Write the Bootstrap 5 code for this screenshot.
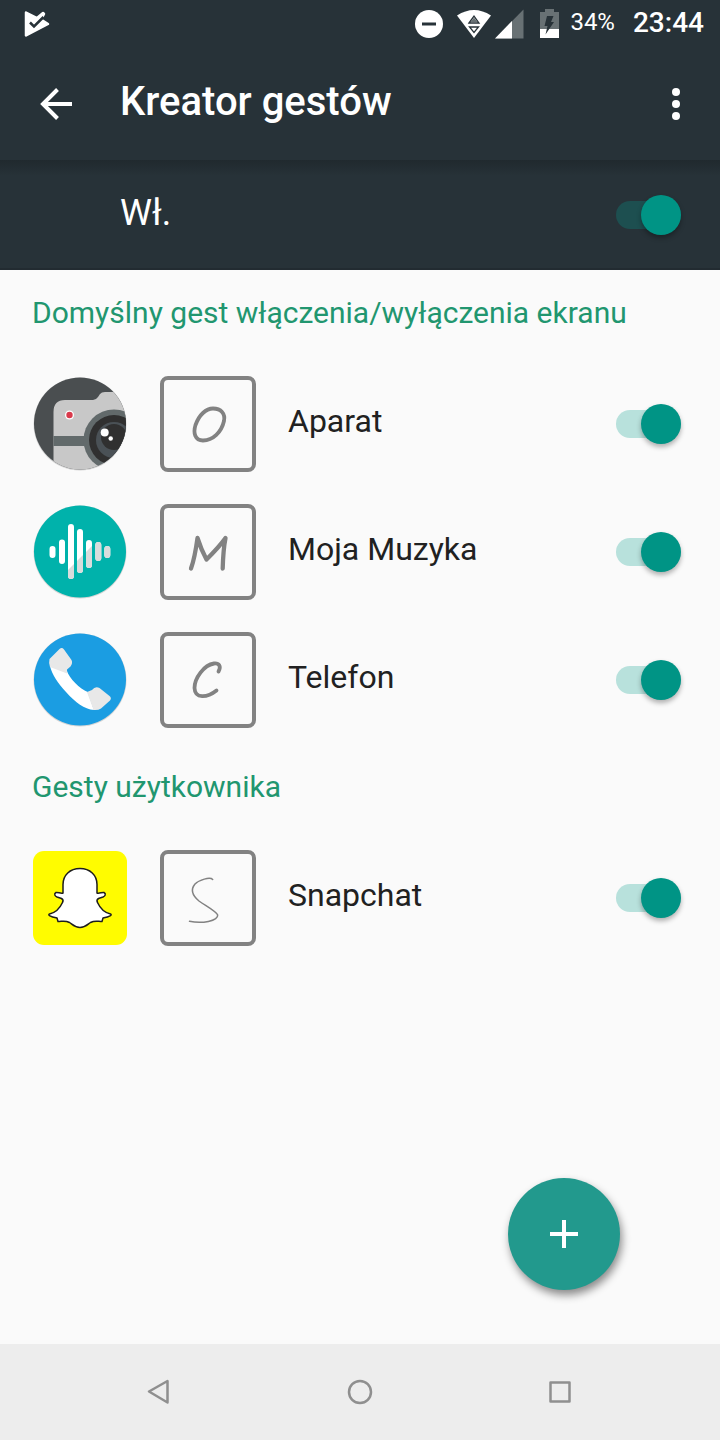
<!DOCTYPE html>
<html lang="pl">
<head>
<meta charset="utf-8">
<meta name="viewport" content="width=device-width, initial-scale=1">
<title>Kreator gestów</title>
<link href="https://cdn.jsdelivr.net/npm/bootstrap@5.3.0/dist/css/bootstrap.min.css" rel="stylesheet">
<style>
  body { font-family: Roboto, "Noto Sans", sans-serif; background: #fafafa; color: #212121; }
  svg { display: block; flex: none; }
  .dark-bar { background: #273238; color: #fff; }
  .status-bar { height: 48px; padding: 0 16px 0 22px; }
  .battery-text { font-size: 24px; line-height: 32px; padding-bottom: 4px; margin: 0 18px 0 8px; }
  .clock { font-size: 28px; line-height: 32px; font-weight: 500; padding-bottom: 2px; }
  .app-bar { height: 112px; padding: 0 28px 0 32px; }
  .app-title { font-size: 40px; line-height: 48px; font-weight: 500; margin-left: 40px; padding-bottom: 4px; }
  .icon-btn { background: none; border: 0; padding: 0; color: inherit; }
  .master-row { height: 110px; padding: 2px 39px 0 120px; border-bottom: 2px solid #222b31;
    background-image: linear-gradient(#20292e, #273238 16px); }
  .master-label { font-size: 36px; line-height: 44px; padding-bottom: 4px; }
  .section-title { height: 90px; padding: 25px 32px 0; font-size: 30px; line-height: 36px; font-weight: 400; color: #21966f; }
  .gesture-row { height: 128px; padding: 0 39px 0 32px; gap: 32px; }
  .gesture-label { font-size: 32px; line-height: 40px; padding-bottom: 6px; }
  .gesture-box { border: 4px solid #828282; border-radius: 8px; width: 96px; height: 96px; }
  .toggle { appearance: none; display: flex; align-items: center; justify-content: flex-start; flex: none;
    width: 65px; height: 28px; margin: 0; border-radius: 14px; background: #c4c4c4; }
  .toggle::before { content: ""; flex: none; width: 40px; height: 40px; border-radius: 50%; background: #f1f1f1;
    box-shadow: 0 3px 5px rgba(0, 0, 0, .3); }
  .toggle:checked { background: #b8e1dc; justify-content: flex-end; }
  .toggle:checked::before { background: #009485; }
  .master-row .toggle:checked { background: #1d4f50; }
  .fab { width: 112px; height: 112px; margin: 0 100px 54px 0; border: 0; padding: 0; border-radius: 50%;
    background: #22998d; box-shadow: 2px 5px 9px rgba(0, 0, 0, .45); }
  .nav-keys { height: 96px; background: #ededed; color: #8f8f8f; padding: 0 60px; }
</style>
</head>
<body class="d-flex flex-column min-vh-100">

<div class="dark-bar status-bar d-flex align-items-center">
  <svg width="28" height="28" viewBox="22 10 28 28" aria-hidden="true">
    <path d="M26 12.500L37 18L43 13L44 14L41 19.500L48 24L26 35.500Z" fill="#fff" stroke="#fff" stroke-width="2.500" stroke-linejoin="round"/>
    <path d="M30 22.500L34 26.500L43.500 17" stroke="#273238" stroke-width="2.500" fill="none"/>
  </svg>
  <div class="d-flex align-items-center ms-auto">
    <svg width="150" height="32" viewBox="412 8 150 32" aria-hidden="true">
      <circle cx="429" cy="24" r="14" fill="#fff"/>
      <path d="M422 24H436" stroke="#273238" stroke-width="3"/>
      <path d="M474 38L457 15.500Q474 4.500 491 15.500Z" fill="#fff"/>
      <path d="M469 23L474 16L479 23ZM469.500 27H478.500L474 32.500Z" fill="none" stroke="#273238" stroke-width="1.300"/>
      <path d="M470.500 22L474 17.500L477.500 22Z" fill="#687174"/>
      <path d="M523.500 9.500V38.500H495Z" fill="#687174"/>
      <path d="M512 21V38.500H495Z" fill="#fff"/>
      <path d="M540 12H545V9H554V12H559V38H540Z" fill="#687174"/>
      <path d="M540 29H559V38H540Z" fill="#fff"/>
      <path d="M547 16H553.500L551 22H554L545.500 34.500L547.500 26H544.500Z" fill="#273238"/>
    </svg>
    <span class="battery-text">34%</span>
    <span class="clock">23:44</span>
  </div>
</div>

<header class="dark-bar app-bar d-flex align-items-center">
  <button type="button" class="icon-btn" aria-label="Wstecz">
    <svg width="48" height="48" viewBox="0 0 48 48" fill="none" stroke="#fff" stroke-width="4"><path d="M40 24H11M25.500 9.500L11 24L25.500 38.500"/></svg>
  </button>
  <h1 class="app-title mb-0">Kreator gestów</h1>
  <button type="button" class="icon-btn ms-auto" aria-label="Więcej opcji">
    <svg width="32" height="48" viewBox="0 0 32 48" fill="#fff"><circle cx="16" cy="12" r="4"/><circle cx="16" cy="24" r="4"/><circle cx="16" cy="36" r="4"/></svg>
  </button>
</header>

<div class="dark-bar master-row d-flex align-items-center justify-content-between">
  <label class="master-label" for="sw-all">Wł.</label>
  <input class="toggle" type="checkbox" role="switch" id="sw-all" checked>
</div>

<main class="d-flex flex-column flex-grow-1">
  <h2 class="section-title mb-0">Domyślny gest włączenia/wyłączenia ekranu</h2>

  <div class="gesture-row d-flex align-items-center">
    <svg width="96" height="96" viewBox="0 0 96 96" aria-hidden="true">
      <clipPath id="disc"><circle cx="48" cy="47.500" r="46"/></clipPath>
      <circle cx="48" cy="48" r="46.500" fill="#d5d5d5"/>
      <g clip-path="url(#disc)">
        <path d="M0 0H96V96H0Z" fill="#4a4e50"/>
        <path d="M21.500 96V36Q21.500 24 33 24H61Q64 24 66 21L68 18Q69.500 16 73 16H96V96Z" fill="#c8c8c8"/>
        <path d="M21.500 60H56V70H21.500Z" fill="#626a6b"/>
        <circle cx="82" cy="64" r="30.500" fill="#626a6b"/>
        <circle cx="82" cy="64" r="25" fill="#303030"/>
        <circle cx="82" cy="64" r="18" fill="#4a5156"/>
        <circle cx="82" cy="61" r="13" fill="#303030"/>
      </g>
      <circle cx="37.500" cy="39" r="4.500" fill="#fff"/>
      <circle cx="37.500" cy="39" r="3.200" fill="#d93a4c"/>
      <circle cx="72.700" cy="56.500" r="4" fill="#fff"/>
      <circle cx="78.700" cy="62.500" r="2.200" fill="#fff"/>
    </svg>
    <svg class="gesture-box" viewBox="4 4 88 88" aria-hidden="true">
      <path d="M53 32.500C61 32.500 65.500 37.500 64 45C61.500 56 53 64.500 43 64.500C35 64.500 33 57 35.500 49C39 39 46 32.500 53 32.500Z" fill="none" stroke="#828282" stroke-width="3.800"/>
    </svg>
    <label class="gesture-label flex-grow-1" for="sw-camera">Aparat</label>
    <input class="toggle" type="checkbox" role="switch" id="sw-camera" checked>
  </div>

  <div class="gesture-row d-flex align-items-center">
    <svg width="96" height="96" viewBox="0 0 96 96" aria-hidden="true">
      <clipPath id="shade"><path d="M34 68L66 36H96V96H34Z"/></clipPath>
      <circle cx="48" cy="48" r="46.500" fill="#d5d5d5"/>
      <circle cx="48" cy="47.500" r="46" fill="#00b2ab"/>
      <path stroke-width="6" stroke-linecap="round" stroke="#fff" d="M20.500 45V51M30 38.500V57M39 23V72M48 28V66M57 39V61M66.300 41V54M75.300 45V51"/>
      <path clip-path="url(#shade)" stroke-width="6" stroke-linecap="round" stroke="#d9dcdc" d="M39 23V72M48 28V66M57 39V61M66.300 41V54M75.300 45V51"/>
    </svg>
    <svg class="gesture-box" viewBox="4 4 88 88" aria-hidden="true">
      <path d="M31 64.500C34.500 55 36 45 37.500 34C40 42 43 49 46.500 55.500C53 49 60 42 65.500 34C63.500 44 63 54 62.700 64.500" fill="none" stroke="#828282" stroke-width="4.300" stroke-linecap="round" stroke-linejoin="round"/>
    </svg>
    <label class="gesture-label flex-grow-1" for="sw-music">Moja Muzyka</label>
    <input class="toggle" type="checkbox" role="switch" id="sw-music" checked>
  </div>

  <div class="gesture-row d-flex align-items-center">
    <svg width="96" height="96" viewBox="0 0 96 96" aria-hidden="true">
      <circle cx="48" cy="48" r="46.500" fill="#d5d5d5"/>
      <circle cx="48" cy="47.500" r="46" fill="#1b9de2"/>
      <path d="M18 34L35 39C37 46 48 57 55.700 60L62 78C52 77 44 71 34 60C26 51 20 43 18 34Z" fill="#fff"/>
      <path d="M18 35Q16.500 31 17.500 27L27.500 17Q30 15 32 17.500L39.500 28Q41 31 38.500 34.500L35 37.500V41.500Z" fill="#e8e8e8"/>
      <path d="M55 60L60 58Q63 54 67.500 56L77.500 64Q80 66 78 68.500L69 76.500Q66 78.500 61.500 78Z" fill="#e8e8e8"/>
    </svg>
    <svg class="gesture-box" viewBox="4 4 88 88" aria-hidden="true">
      <path d="M58.500 39.500C61.500 34 59 31 54 31.500C44 33 34.500 46 34.500 56C35 67 47 66 56.500 58.500" fill="none" stroke="#828282" stroke-width="3.800" stroke-linecap="round"/>
    </svg>
    <label class="gesture-label flex-grow-1" for="sw-phone">Telefon</label>
    <input class="toggle" type="checkbox" role="switch" id="sw-phone" checked>
  </div>

  <h2 class="section-title mb-0">Gesty użytkownika</h2>

  <div class="gesture-row d-flex align-items-center">
    <svg width="96" height="96" viewBox="0 0 96 96" aria-hidden="true">
      <rect x="1" y="1" width="94" height="94" rx="11" fill="#fffc00"/>
      <path d="M48 18.500C58 18.500 65 25 65 34.500V43C67 44 70 42 72 42.500C74.500 44 73 46 71 47L66.500 48.500Q64 50 65.500 52.500C68 58 72 62.500 78.500 64C80.500 65 78 66.500 71 68L70 71.500C66 71.500 63 70 58.500 72.500C55 75 53 77.500 48 77.500C43 77.500 41 75 37.500 72.500C33 70 30 71.500 26 71.500L25 68C18 66.500 15.500 65 17.500 64C24 62.500 28 58 30.500 52.500Q32 50 29.500 48.500L25 47C23 46 21.500 44 24 42.500C26 42 29 44 31 43V34.500C31 25 38 18.500 48 18.500Z" fill="#fff" stroke="#1d1d1d" stroke-width="1.500" stroke-linejoin="round"/>
    </svg>
    <svg class="gesture-box" viewBox="4 4 88 88" aria-hidden="true">
      <path d="M52.700 29.500C50 26.500 39 30 35 34C30 40 33 46 39 51C46 56 56 61 57.700 65C58 71 42 74 29.500 71.300" fill="none" stroke="#828282" stroke-width="1.500" stroke-linecap="round"/>
    </svg>
    <label class="gesture-label flex-grow-1" for="sw-snap">Snapchat</label>
    <input class="toggle" type="checkbox" role="switch" id="sw-snap" checked>
  </div>

  <button type="button" class="fab mt-auto ms-auto d-flex align-items-center justify-content-center" aria-label="Dodaj gest">
    <svg width="28" height="28" viewBox="0 0 28 28" stroke="#fff" stroke-width="4"><path d="M14 0V28M0 14H28"/></svg>
  </button>
</main>

<nav class="nav-keys d-flex align-items-center" aria-label="Nawigacja">
  <div class="row g-0 w-100">
    <div class="col d-flex justify-content-center"><button type="button" class="icon-btn" aria-label="Wstecz">
      <svg width="32" height="32" viewBox="0 0 32 32" fill="none" stroke="currentColor" stroke-width="2.500" stroke-linejoin="round"><path d="M5 15.500L23.500 5V26.500Z"/></svg></button></div>
    <div class="col d-flex justify-content-center"><button type="button" class="icon-btn" aria-label="Ekran główny">
      <svg width="32" height="32" viewBox="0 0 32 32" fill="none" stroke="currentColor" stroke-width="2.500"><circle cx="16" cy="16" r="11"/></svg></button></div>
    <div class="col d-flex justify-content-center"><button type="button" class="icon-btn" aria-label="Ostatnie aplikacje">
      <svg width="32" height="32" viewBox="0 0 32 32" fill="none" stroke="currentColor" stroke-width="2.500" stroke-linejoin="round"><path d="M6.500 6.500H25.500V25.500H6.500Z"/></svg></button></div>
  </div>
</nav>

<script src="https://cdn.jsdelivr.net/npm/bootstrap@5.3.0/dist/js/bootstrap.bundle.min.js"></script>
</body>
</html>
